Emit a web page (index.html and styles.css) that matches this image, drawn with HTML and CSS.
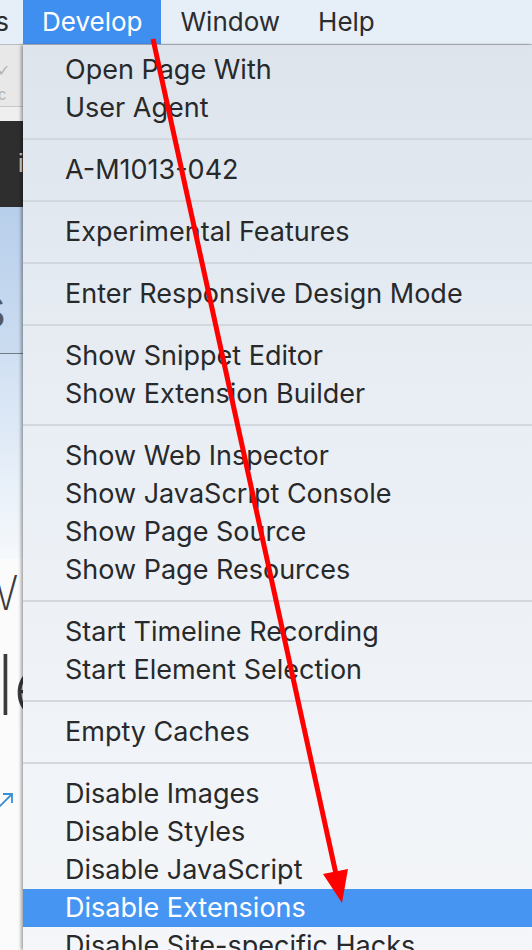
FILE: index.html
```html
<!DOCTYPE html>
<html lang="en">
<head>
    <meta charset="UTF-8">
    <meta name="viewport" content="width=device-width, initial-scale=1.0">
    <title>Develop menu</title>
    <link rel="stylesheet" href="styles.css">
</head>
<body>
    <div class="screen">
        <header class="menubar">
            <span class="mb-item mb-cut"><span>Bookmarks</span></span>
            <span class="mb-item active">Develop</span>
            <span class="mb-item">Window</span>
            <span class="mb-item">Help</span>
        </header>

        <div class="desk">
            <!-- bit of the page behind the menu -->
            <aside class="page-edge">
                <div class="pe-toolbar"><span class="pe-check">✓</span><span class="pe-c">c</span></div>
                <div class="pe-gap"></div>
                <div class="pe-dark"><span>i</span></div>
                <div class="pe-blue"><span>S</span></div>
                <div class="pe-fade"></div>
                <div class="pe-white">
                    <div class="pe-w">W</div>
                    <div class="pe-le">le</div>
                    <svg class="pe-link" width="18" height="18" viewBox="0 0 18 18">
                        <path d="M1 17 L15 3 M6 3 H15 V12" fill="none" stroke="#3b8fd6" stroke-width="1.8"/>
                    </svg>
                </div>
            </aside>

            <ul class="menu">
                <li>Open Page With</li>
                <li>User Agent</li>
                <li class="sep"></li>
                <li>A-M1013-042</li>
                <li class="sep"></li>
                <li>Experimental Features</li>
                <li class="sep"></li>
                <li>Enter Responsive Design Mode</li>
                <li class="sep"></li>
                <li>Show Snippet Editor</li>
                <li>Show Extension Builder</li>
                <li class="sep"></li>
                <li>Show Web Inspector</li>
                <li>Show JavaScript Console</li>
                <li>Show Page Source</li>
                <li>Show Page Resources</li>
                <li class="sep"></li>
                <li>Start Timeline Recording</li>
                <li>Start Element Selection</li>
                <li class="sep"></li>
                <li>Empty Caches</li>
                <li class="sep"></li>
                <li>Disable Images</li>
                <li>Disable Styles</li>
                <li>Disable JavaScript</li>
                <li class="selected">Disable Extensions</li>
                <li>Disable Site-specific Hacks</li>
            </ul>
        </div>

        <!-- red annotation arrow -->
        <svg class="arrow" width="532" height="950" viewBox="0 0 532 950">
            <line x1="153" y1="39" x2="336" y2="874" stroke="#ff0000" stroke-width="5"/>
            <polygon points="323,874 348,869 342,903" fill="#ff0000"/>
        </svg>
    </div>
</body>
</html>
```

FILE: styles.css
```css
body {
    margin: 0;
    padding: 0;
    background-color: #f7f8fa;
    font-family: Inter, "Liberation Sans", sans-serif;
    color: #28292b;
    overflow: hidden;
}

.screen {
    position: relative;
    width: 532px;
    height: 950px;
    overflow: hidden;
}

/* menu bar */

.menubar {
    display: flex;
    height: 44px;
    background-color: #e6eef7;
    border-bottom: 1px solid #b9bec5;
    font-size: 26px;
    line-height: 44px;
}

.mb-item {
    padding: 0 19px;
    white-space: nowrap;
    color: #2b2c2e;
}

.mb-item.active {
    background-color: #3f8ff1;
    color: #fff;
}

.mb-cut {
    display: flex;
    justify-content: flex-end;
    width: 23px;
    padding: 0 14px 0 0;
    box-sizing: border-box;
    overflow: hidden;
}

/* body area */

.desk {
    display: flex;
    height: 905px;
}

.page-edge {
    display: flex;
    flex-direction: column;
    width: 23px;
    flex-shrink: 0;
    overflow: hidden;
    font-family: "Liberation Sans", sans-serif;
}

.pe-toolbar {
    display: flex;
    flex-direction: column;
    height: 62px;
    background-color: #e8e8e8;
    border-bottom: 1px solid #c8c8c8;
    color: #b4b4b4;
    font-size: 16px;
    line-height: 18px;
    padding-top: 17px;
    box-sizing: border-box;
}

.pe-check {
    margin-left: -3px;
}

.pe-c {
    margin-left: -2px;
    margin-top: 6px;
}

.pe-gap {
    height: 14px;
    background-color: #efefef;
}

.pe-dark {
    height: 86px;
    background-color: #2e2e2e;
    color: #d8d8d8;
    font-size: 26px;
    line-height: 26px;
    padding: 29px 0 0 18px;
    box-sizing: border-box;
}

.pe-blue {
    height: 147px;
    background: linear-gradient(#b8cfeb, #cbdcf0);
    border-bottom: 1px solid #737c87;
    color: #55595e;
    font-size: 44px;
    font-weight: 300;
    line-height: 44px;
    padding-top: 84px;
    box-sizing: border-box;
    text-indent: -24px;
}

.pe-fade {
    height: 205px;
    background: linear-gradient(#d0e0f3, #f6f9fc);
}

.pe-white {
    flex: 1;
    background-color: #fbfbfc;
    color: #3a3a3a;
    font-family: Inter, sans-serif;
    font-weight: 200;
}

.pe-w {
    font-size: 48px;
    line-height: 48px;
    margin-top: 10px;
    text-indent: -27px;
}

.pe-le {
    font-size: 84px;
    line-height: 84px;
    margin-top: 26px;
    text-indent: -4px;
    letter-spacing: -2px;
}

.pe-link {
    display: block;
    margin-top: 64px;
    margin-left: -3px;
}

/* the develop menu */

.menu {
    flex: 1;
    list-style: none;
    margin: 0;
    padding: 6px 0 0;
    background: linear-gradient(#dde4ec, #eaeff5 45%, #f4f6f9);
    box-shadow: -2px 0 3px rgba(0, 0, 0, 0.35);
    font-size: 27px;
}

.menu li {
    height: 38px;
    line-height: 38px;
    padding-left: 42px;
    white-space: nowrap;
}

.menu li.sep {
    height: 2px;
    margin: 11px 0;
    padding: 0;
    background-color: #d3d8df;
}

.menu li.selected {
    background-color: #4795f3;
    color: #fff;
}

/* annotation on top */

.arrow {
    position: absolute;
    top: 0;
    left: 0;
    pointer-events: none;
}
```
